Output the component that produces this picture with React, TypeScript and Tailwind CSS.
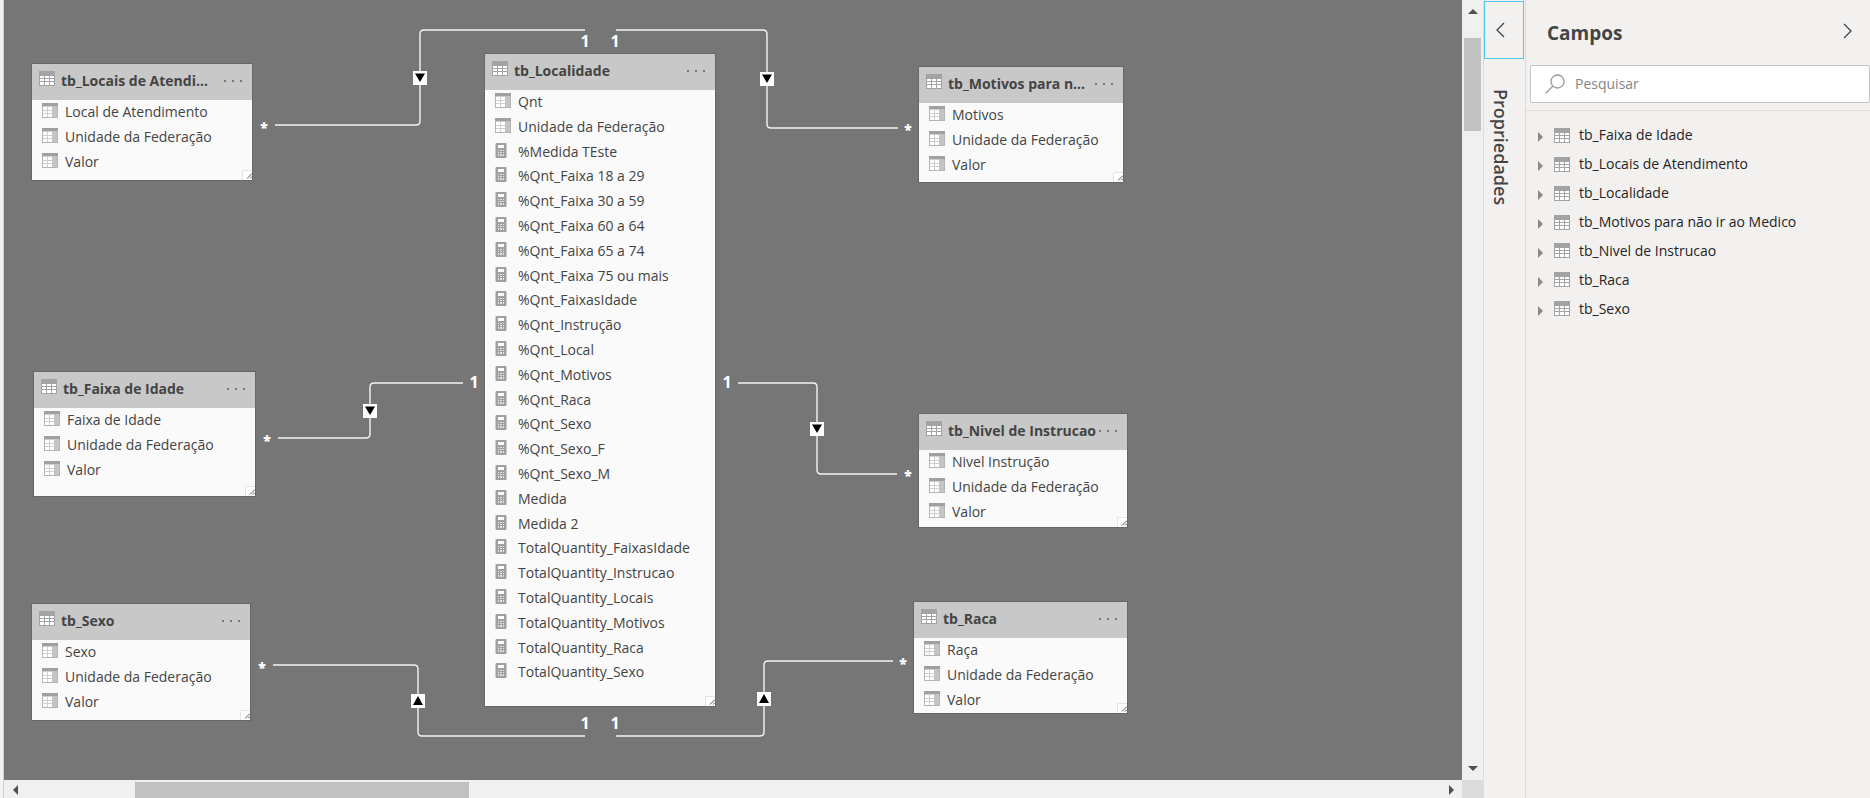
import React from "react";

type FieldKind = "column" | "measure";
type Field = { name: string; kind: FieldKind };
type TableNode = {
  title: string;
  place: string;
  list?: string;
  fields: Field[];
};

const column = (name: string): Field => ({ name, kind: "column" });
const measure = (name: string): Field => ({ name, kind: "measure" });

const nodes: TableNode[] = [
  {
    title: "tb_Locais de Atendi...",
    place: "left-[27px] top-[63px] w-[222px] h-[118px]",
    fields: [column("Local de Atendimento"), column("Unidade da Federação"), column("Valor")],
  },
  {
    title: "tb_Faixa de Idade",
    place: "left-[29px] top-[371px] w-[223px] h-[126px]",
    fields: [column("Faixa de Idade"), column("Unidade da Federação"), column("Valor")],
  },
  {
    title: "tb_Sexo",
    place: "left-[27px] top-[603px] w-[220px] h-[118px]",
    fields: [column("Sexo"), column("Unidade da Federação"), column("Valor")],
  },
  {
    title: "tb_Localidade",
    place: "left-[480px] top-[53px] w-[232px] h-[654px]",
    list: "h-[595px]",
    fields: [
      column("Qnt"),
      column("Unidade da Federação"),
      measure("%Medida TEste"),
      measure("%Qnt_Faixa 18 a 29"),
      measure("%Qnt_Faixa 30 a 59"),
      measure("%Qnt_Faixa 60 a 64"),
      measure("%Qnt_Faixa 65 a 74"),
      measure("%Qnt_Faixa 75 ou mais"),
      measure("%Qnt_FaixasIdade"),
      measure("%Qnt_Instrução"),
      measure("%Qnt_Local"),
      measure("%Qnt_Motivos"),
      measure("%Qnt_Raca"),
      measure("%Qnt_Sexo"),
      measure("%Qnt_Sexo_F"),
      measure("%Qnt_Sexo_M"),
      measure("Medida"),
      measure("Medida 2"),
      measure("TotalQuantity_FaixasIdade"),
      measure("TotalQuantity_Instrucao"),
      measure("TotalQuantity_Locais"),
      measure("TotalQuantity_Motivos"),
      measure("TotalQuantity_Raca"),
      measure("TotalQuantity_Sexo"),
    ],
  },
  {
    title: "tb_Motivos para n...",
    place: "left-[914px] top-[66px] w-[206px] h-[117px]",
    fields: [column("Motivos"), column("Unidade da Federação"), column("Valor")],
  },
  {
    title: "tb_Nivel de Instrucao",
    place: "left-[914px] top-[413px] w-[210px] h-[115px]",
    fields: [column("Nivel Instrução"), column("Unidade da Federação"), column("Valor")],
  },
  {
    title: "tb_Raca",
    place: "left-[909px] top-[601px] w-[215px] h-[113px]",
    fields: [column("Raça"), column("Unidade da Federação"), column("Valor")],
  },
];

const links = [
  { d: "M271 125H412q4 0 4-4V34q0-4 4-4H581", x: 416, y: 78, up: false },
  { d: "M612 30H759q4 0 4 4V124q0 4 4 4H894", x: 763, y: 79, up: false },
  { d: "M274 438H362q4 0 4-4V387q0-4 4-4H459", x: 366, y: 411, up: false },
  { d: "M734 383H809q4 0 4 4V470q0 4 4 4H893", x: 813, y: 429, up: false },
  { d: "M269 665H410q4 0 4 4V732q0 4 4 4H581", x: 414, y: 701, up: true },
  { d: "M612 736H756q4 0 4-4V665q0-4 4-4H889", x: 760, y: 699, up: true },
];

const ones = [
  "left-[581px] top-[41px]",
  "left-[611px] top-[41px]",
  "left-[470px] top-[382px]",
  "left-[723px] top-[382px]",
  "left-[581px] top-[723px]",
  "left-[611px] top-[723px]",
];

const manys = [
  "left-[260px] top-[128px]",
  "left-[904px] top-[130px]",
  "left-[263px] top-[441px]",
  "left-[904px] top-[476px]",
  "left-[258px] top-[668px]",
  "left-[899px] top-[664px]",
];

const tables = [
  "tb_Faixa de Idade",
  "tb_Locais de Atendimento",
  "tb_Localidade",
  "tb_Motivos para não ir ao Medico",
  "tb_Nivel de Instrucao",
  "tb_Raca",
  "tb_Sexo",
];

function TableIcon() {
  return (
    <svg className="shrink-0" width="16" height="15" viewBox="0 0 16 15" aria-hidden="true">
      <rect width="16" height="15" fill="#a3a3a3" />
      <g fill="#fff">
        <path d="M1 5h4v2H1zM6 5h4v2H6zM11 5h4v2h-4z" />
        <path d="M1 8h4v2H1zM6 8h4v2H6zM11 8h4v2h-4z" />
        <path d="M1 11h4v3H1zM6 11h4v3H6zM11 11h4v3h-4z" />
      </g>
    </svg>
  );
}

function ColumnIcon() {
  return (
    <svg className="shrink-0" width="16" height="15" viewBox="0 0 16 15" aria-hidden="true">
      <rect width="16" height="15" fill="#b4b4b4" />
      <rect width="16" height="3" fill="#a0a0a0" />
      <rect x="1" y="3" width="9" height="11" fill="#cfcfcf" />
      <rect x="10" y="3" width="5" height="11" fill="#c4c4c4" />
      <path d="M1 4h4v3H1zM6 4h4v3H6zM1 8h4v2H1zM6 8h4v2H6zM1 11h4v3H1zM6 11h4v3H6z" fill="#fff" />
    </svg>
  );
}

function MeasureIcon() {
  return (
    <svg className="shrink-0" width="16" height="15" viewBox="0 0 16 15" aria-hidden="true">
      <rect x="0.5" width="11" height="15" rx="1" fill="#a0a0a0" />
      <rect x="3" y="2" width="6" height="3" fill="#fff" />
      <path d="M3 7h1v1H3zM5 7h2v1H5zM8 7h1v1H8zM3 9h1v1H3zM5 9h2v1H5zM8 9h1v1H8zM3 11h1v2H3zM5 11h2v2H5zM8 11h1v2H8z" fill="#e4e4e4" />
    </svg>
  );
}

function NodeCard({ node }: { node: TableNode }) {
  return (
    <section
      className={`absolute flex flex-col overflow-hidden border border-[#676767] bg-[#fafafa] ${node.place}`}
    >
      <header className="flex h-9 shrink-0 items-start bg-[#c8c8c8] pl-[7px] pr-[9px] pt-[7px]">
        <TableIcon />
        <h2 className="ml-[6px] min-w-0 flex-1 whitespace-nowrap text-[14px] font-bold leading-5 text-[#444]">
          {node.title}
        </h2>
        <button type="button" aria-label="Mais opções" className="flex h-5 w-5 shrink-0 items-center justify-center">
          <svg width="18" height="2" viewBox="0 0 18 2" fill="#777">
            <path d="M0 0h2v2H0zM8 0h2v2H8zM16 0h2v2h-2z" />
          </svg>
        </button>
      </header>
      <ul className={`flex shrink-0 flex-col ${node.list ?? "h-[75px]"}`}>
        {node.fields.map((field) => (
          <li
            key={field.name}
            className="flex min-h-0 flex-1 items-start gap-[7px] whitespace-nowrap pl-[10px] pt-[3px] text-[14px] leading-[18px] text-[#444]"
          >
            {field.kind === "column" ? <ColumnIcon /> : <MeasureIcon />}
            {field.name}
          </li>
        ))}
      </ul>
      <svg className="absolute bottom-0 right-0" width="10" height="10" viewBox="0 0 10 10" aria-hidden="true">
        <rect width="10" height="10" fill="#fff" />
        <path d="M0.5 10V0.5H10" fill="none" stroke="#e3e3e3" />
        <path d="M5 8.500L10 3.500M8 8.500L10 6.500" stroke="#555" />
      </svg>
    </section>
  );
}

function Arrow({ d }: { d: string }) {
  return (
    <svg width="10" height="10" viewBox="0 0 10 10" fill="#505050" aria-hidden="true">
      <path d={d} />
    </svg>
  );
}

function Diagram() {
  return (
    <div className="relative min-h-0 flex-1 overflow-hidden bg-[#767676]">
      <svg className="absolute inset-0 h-full w-full" aria-hidden="true">
        {links.map((link) => (
          <g key={link.d}>
            <path d={link.d} fill="none" stroke="#f4f4f4" strokeWidth="1.4" />
            <rect x={link.x - 7} y={link.y - 7} width="14" height="14" fill="#fff" />
            <path
              d={
                link.up
                  ? `M${link.x} ${link.y - 5}l5 9h-10z`
                  : `M${link.x} ${link.y + 4}l5-8.500h-10z`
              }
              fill="#000"
            />
          </g>
        ))}
      </svg>
      {ones.map((place) => (
        <span
          key={place}
          className={`absolute -translate-x-1/2 -translate-y-1/2 text-[16px] font-bold leading-5 text-white ${place}`}
        >
          1
        </span>
      ))}
      {manys.map((place) => (
        <span
          key={place}
          className={`absolute -translate-x-1/2 -translate-y-1/2 text-[14px] font-extrabold leading-5 text-white ${place}`}
        >
          *
        </span>
      ))}
      {nodes.map((node) => (
        <NodeCard key={node.title} node={node} />
      ))}
    </div>
  );
}

export default function App() {
  return (
    <div className="flex h-screen min-h-[760px] w-full overflow-hidden bg-[#f2f1f0] font-['Open_Sans','Noto_Sans',sans-serif] text-[#323130]">
      <div className="w-1 shrink-0 border-r border-[#cfcfcf] bg-[#f3f2f1]" />

      <main className="flex min-w-0 flex-1">
        <div className="flex min-w-0 flex-1 flex-col">
          <Diagram />
          <div className="flex h-[18px] shrink-0 items-start bg-[#f0f0f0] pt-[2px]">
            <button type="button" aria-label="Rolar para a esquerda" className="flex h-4 w-[22px] items-center justify-center">
              <Arrow d="M8 0v10L3 5z" />
            </button>
            <div className="flex h-4 flex-1 pl-[109px]">
              <div className="w-[334px] bg-[#c1c1c1]" />
            </div>
            <button type="button" aria-label="Rolar para a direita" className="flex h-4 w-[22px] items-center justify-center">
              <Arrow d="M3 0v10l5-5z" />
            </button>
          </div>
        </div>
        <div className="flex w-[21px] shrink-0 flex-col bg-[#f0f0f0]">
          <button type="button" aria-label="Rolar para cima" className="flex h-[22px] items-center justify-center">
            <Arrow d="M0 8h10L5 3z" />
          </button>
          <div className="flex-1 px-[2px] pt-4">
            <div className="h-[93px] bg-[#c1c1c1]" />
          </div>
          <button type="button" aria-label="Rolar para baixo" className="flex h-[22px] items-center justify-center">
            <Arrow d="M0 2h10L5 7z" />
          </button>
          <div className="h-[18px] bg-[#dcdcdc]" />
        </div>
      </main>

      <aside className="flex w-[42px] shrink-0 flex-col items-start border-l border-[#dddcdb] pt-px">
        <button
          type="button"
          aria-label="Expandir Propriedades"
          className="flex h-[58px] w-10 items-center justify-center border border-[#4fc8ee] pr-2"
        >
          <svg width="9" height="16" viewBox="0 0 9 16" fill="none" stroke="#444" strokeWidth="1.3">
            <path d="M8 1L1 8l7 7" />
          </svg>
        </button>
        <h2 className="ml-[5px] mt-[30px] text-[18px] font-semibold leading-6 text-[#444] [writing-mode:vertical-rl]">
          Propriedades
        </h2>
      </aside>

      <aside className="flex w-[345px] shrink-0 flex-col border-l border-[#dddcdb]">
        <div className="flex h-[65px] items-center justify-between pl-[21px] pr-[18px]">
          <h1 className="text-[19px] font-bold leading-6 text-[#444]">Campos</h1>
          <button type="button" aria-label="Recolher Campos" className="pb-1">
            <svg width="9" height="16" viewBox="0 0 9 16" fill="none" stroke="#444" strokeWidth="1.3">
              <path d="M1 1l7 7-7 7" />
            </svg>
          </button>
        </div>
        <div className="border-b border-[#dddcdb] pb-[7px] pl-1">
          <label className="flex h-[38px] items-center gap-[10px] rounded-[2px] border border-[#c4c4c4] bg-white pl-[14px]">
            <svg width="20" height="20" viewBox="0 0 20 20" fill="none" stroke="#999" strokeWidth="1.3" aria-hidden="true">
              <circle cx="12.500" cy="7.500" r="6.500" />
              <path d="M8 12L0.500 19.500" />
            </svg>
            <input
              type="text"
              aria-label="Pesquisar"
              placeholder="Pesquisar"
              className="min-w-0 flex-1 bg-transparent text-[14px] leading-5 outline-none placeholder:text-[#858585]"
            />
          </label>
        </div>
        <ul className="flex h-[212px] flex-col pt-[10px]">
          {tables.map((name) => (
            <li key={name} className="flex flex-1">
              <button type="button" className="flex w-full items-center pl-3 text-left text-[14px] leading-5 text-[#252423]">
                <svg className="mt-1" width="5" height="10" viewBox="0 0 5 10" fill="#8c8a88" aria-hidden="true">
                  <path d="M0 0l5 5-5 5z" />
                </svg>
                <span className="ml-[11px]">
                  <TableIcon />
                </span>
                <span className="ml-[9px]">{name}</span>
              </button>
            </li>
          ))}
        </ul>
      </aside>
    </div>
  );
}
